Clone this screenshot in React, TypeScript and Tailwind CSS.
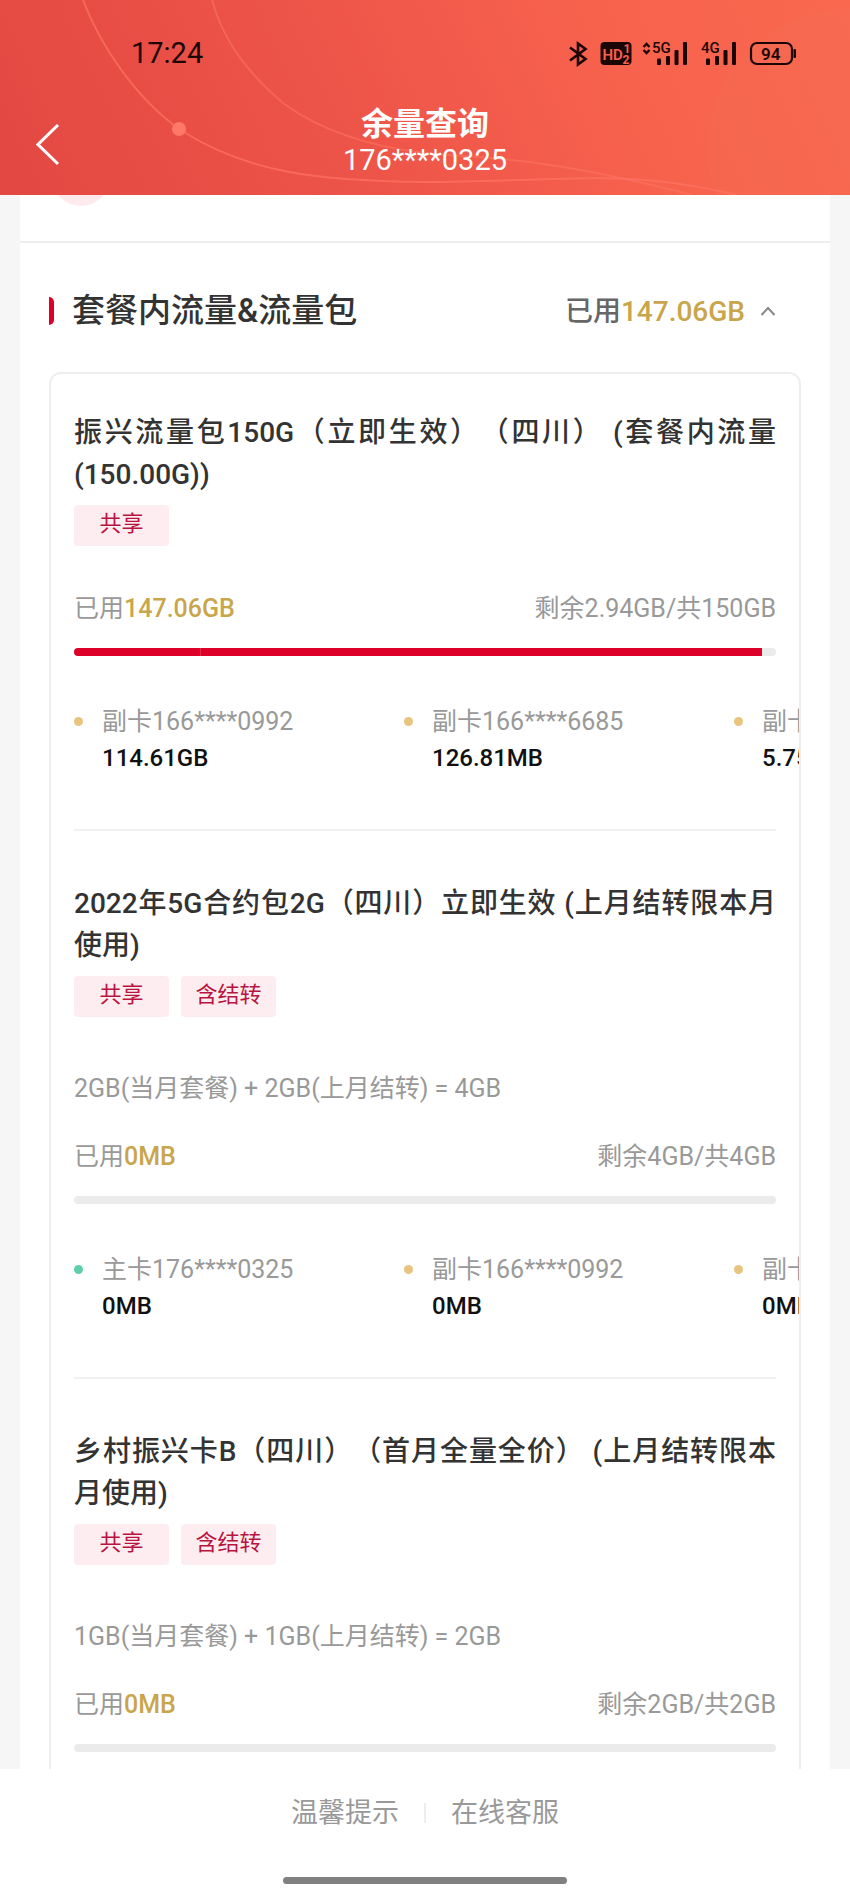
import React, { useState } from 'react'

interface Card {
  name: string
  value: string
  main?: boolean
}

interface Plan {
  title: string
  tags: string[]
  formula?: string
  used: string
  rest: string
  // share of the bar taken by each card, in percent
  segments: number[]
  cards: Card[]
}

const plans: Plan[] = [
  {
    title: '振兴流量包150G（立即生效）（四川） (套餐内流量(150.00G))',
    tags: ['共享'],
    used: '147.06GB',
    rest: '剩余2.94GB/共150GB',
    segments: [18, 80],
    cards: [
      { name: '副卡166****0992', value: '114.61GB' },
      { name: '副卡166****6685', value: '126.81MB' },
      { name: '副卡', value: '5.75' },
    ],
  },
  {
    title: '2022年5G合约包2G（四川）立即生效 (上月结转限本月使用)',
    tags: ['共享', '含结转'],
    formula: '2GB(当月套餐) + 2GB(上月结转) = 4GB',
    used: '0MB',
    rest: '剩余4GB/共4GB',
    segments: [],
    cards: [
      { name: '主卡176****0325', value: '0MB', main: true },
      { name: '副卡166****0992', value: '0MB' },
      { name: '副卡', value: '0MB' },
    ],
  },
  {
    title: '乡村振兴卡B（四川）（首月全量全价） (上月结转限本月使用)',
    tags: ['共享', '含结转'],
    formula: '1GB(当月套餐) + 1GB(上月结转) = 2GB',
    used: '0MB',
    rest: '剩余2GB/共2GB',
    segments: [],
    cards: [],
  },
]

function StatusIcons() {
  return (
    <svg
      width="230"
      height="28"
      viewBox="568 40 230 28"
      fill="none"
      stroke="#1c0605"
      fontFamily="Roboto, sans-serif"
    >
      {/* bluetooth */}
      <path
        d="M570 47.5 L585.5 59 L578 64.5 V43.5 L585.5 49 L570 60.5"
        strokeWidth="2.6"
        strokeLinejoin="miter"
      />
      {/* HD 1/2 */}
      <rect x="600.5" y="42" width="31" height="23" rx="4" fill="#1c0605" stroke="none" />
      <g fill="#f9614d" stroke="none" fontWeight="700">
        <text x="602.5" y="59.5" fontSize="15" fontWeight="600">HD</text>
        <text x="623.5" y="52.5" fontSize="12">1</text>
        <text x="622.5" y="63.5" fontSize="12">2</text>
      </g>
      {/* 5G */}
      <path d="M643.5 47 L646.5 44 L649.5 47 M643.5 50 L646.5 53 L649.5 50" strokeWidth="2.4" />
      <g fill="#1c0605" stroke="none">
        <text x="652" y="53" fontSize="15" fontWeight="500">5G</text>
        <rect x="657" y="58.5" width="4" height="6.5" rx="1" />
        <rect x="666" y="56" width="4" height="9" rx="1" />
        <rect x="674.5" y="50" width="4" height="15" rx="1" />
        <rect x="683" y="42" width="4" height="23" rx="1" />
      </g>
      {/* 4G */}
      <g fill="#1c0605" stroke="none">
        <text x="701" y="53" fontSize="15" fontWeight="500">4G</text>
        <rect x="706" y="58.5" width="4" height="6.5" rx="1" />
        <rect x="715" y="56" width="4" height="9" rx="1" />
        <rect x="723.5" y="50" width="4" height="15" rx="1" />
        <rect x="732" y="42" width="4" height="23" rx="1" />
      </g>
      {/* battery */}
      <rect x="751" y="43" width="41" height="21" rx="6" strokeWidth="2.2" />
      <rect x="793.5" y="49" width="2.5" height="9" rx="1" fill="#1c0605" stroke="none" />
      <text x="761" y="59.5" fontSize="17" fontWeight="600" fill="#1c0605" stroke="none">94</text>
    </svg>
  )
}

function HeaderArt() {
  return (
    <svg
      className="absolute inset-0 h-full w-full"
      viewBox="0 0 850 195"
      preserveAspectRatio="none"
      fill="none"
      stroke="#fd7462"
      strokeWidth="2"
      aria-hidden="true"
    >
      <circle cx="850" cy="150" r="142" fill="#f0735c" fillOpacity="0.2" stroke="none" />
      <path
        d="M83 0 C100 45 135 97 179 129 C245 172 315 181 425 182 C510 182 600 174 655 181 C690 184 715 190 737 195"
        strokeOpacity="0.7"
      />
      <path
        d="M212 0 C222 35 240 66 283 103 C325 134 375 147 425 153 C470 157 510 158 550 165 C605 173 650 184 692 195"
        strokeOpacity="0.55"
      />
      <circle cx="179" cy="129" r="7" fill="#ff7868" stroke="none" />
    </svg>
  )
}

function Header() {
  return (
    <header className="relative h-[195px] shrink-0 bg-[linear-gradient(65deg,#e34742_0%,#ee5549_42%,#f7624d_72%,#fa684f_100%)]">
      <HeaderArt />
      <div className="relative flex h-[108px] items-center justify-between pr-[52px] pl-[131px]">
        <span className="text-[29px] text-[#1c0605]">17:24</span>
        <StatusIcons />
      </div>
      <div className="relative grid grid-cols-[1fr_auto_1fr] items-start">
        <button type="button" aria-label="返回" className="ml-9 w-6 pt-4">
          <svg width="24" height="42" viewBox="0 0 24 42" fill="none" stroke="#fff" strokeWidth="3">
            <path d="M22 1 L2 20.5 L22 40" />
          </svg>
        </button>
        <div className="text-center text-white">
          <h1 className="text-[32px] leading-8 font-bold">余量查询</h1>
          <p className="text-[29px] leading-10">176****0325</p>
        </div>
      </div>
    </header>
  )
}

function CardUsage({ card }: { card: Card }) {
  return (
    <li className="flex w-[330px] shrink-0 whitespace-nowrap">
      <span
        className={
          card.main
            ? 'mt-[14px] mr-[19px] h-[9px] w-[9px] shrink-0 rounded-full bg-[#5fcfa8]'
            : 'mt-[14px] mr-[19px] h-[9px] w-[9px] shrink-0 rounded-full bg-[#e8c47f]'
        }
      />
      <div className="leading-[37px]">
        <p className="text-[25px] text-[#999]">{card.name}</p>
        <p className="text-[24px] font-medium text-[#111]">{card.value}</p>
      </div>
    </li>
  )
}

function PlanItem({ plan }: { plan: Plan }) {
  return (
    <article className="border-b-2 border-[#f0f0f0] pt-[52px] pb-[52px] first:pt-[38px] last:border-0">
      <h3 className="text-justify text-[28px] leading-[42px] font-medium text-[#333] [text-spacing-trim:space-all]">
        {plan.title}
      </h3>
      <div className="mt-[9px] flex gap-3">
        {plan.tags.map((tag) => (
          <span
            key={tag}
            className="h-[41px] w-[95px] rounded-sm bg-[#fdedf1] text-center text-[22px] leading-[38px] text-[#b9143f]"
          >
            {tag}
          </span>
        ))}
      </div>

      {plan.formula && (
        <p className="mt-[54px] text-[25px] leading-9 text-[#999]">{plan.formula}</p>
      )}

      <div
        className={
          plan.formula
            ? 'mt-8 flex justify-between text-[25px] leading-9 text-[#999]'
            : 'mt-[45px] flex justify-between text-[25px] leading-9 text-[#999]'
        }
      >
        <span>
          已用<span className="font-medium text-[#c9a54c]">{plan.used}</span>
        </span>
        <span>{plan.rest}</span>
      </div>

      <div className="mt-[21px] flex h-2 overflow-hidden rounded-full bg-[#ebebeb]">
        {plan.segments.map((width, i) => (
          <div
            key={i}
            className="border-l border-[#e02a4c] bg-[#dd0029] first:border-0"
            style={{ width: `${width}%` }}
          />
        ))}
      </div>

      {plan.cards.length > 0 && (
        <ul className="mt-[47px] -mr-[23px] flex overflow-hidden">
          {plan.cards.map((card, i) => (
            <CardUsage key={i} card={card} />
          ))}
        </ul>
      )}
    </article>
  )
}

export default function App() {
  const [open, setOpen] = useState(true)

  return (
    <div
      lang="zh-CN"
      className="flex h-screen flex-col bg-white font-[Roboto,'Noto_Sans_CJK_SC',sans-serif]"
    >
      <Header />

      <main className="min-h-0 flex-1 overflow-y-auto bg-[#f6f6f6] px-5 [scrollbar-width:none]">
        <div className="bg-white">
          <div className="flex h-12 items-end overflow-hidden border-b-2 border-[#eee] pb-[35px] pl-8">
            <span className="h-[58px] w-[58px] shrink-0 rounded-full bg-linear-to-b from-[#fdd5dc] to-[#fdecef]" />
          </div>

          <section className="px-[29px]">
            <div className="flex items-center justify-between pt-11 pb-[37px]">
              <h2 className="flex items-center text-[33px] leading-[48px] font-medium text-[#333]">
                <span className="mr-[18px] h-7 w-[5px] rounded-r-md bg-[#dd0029]" />
                套餐内流量&amp;流量包
              </h2>
              <button
                type="button"
                aria-expanded={open}
                onClick={() => setOpen(!open)}
                className="mr-[25px] flex items-center pt-[2px] text-[28px] font-medium text-[#666]"
              >
                已用<span className="text-[#c9a54c]">147.06GB</span>
                <svg
                  className={open ? 'ml-[15px]' : 'ml-[15px] rotate-180'}
                  width="16"
                  height="12"
                  viewBox="0 0 16 12"
                  fill="none"
                  stroke="#888"
                  strokeWidth="2"
                >
                  <path d="M1.5 9 L8 2 L14.5 9" />
                </svg>
              </button>
            </div>

            {open && (
              <div className="overflow-hidden rounded-xl border-2 border-[#eee] px-[23px]">
                {plans.map((plan) => (
                  <PlanItem key={plan.title} plan={plan} />
                ))}
              </div>
            )}
          </section>
        </div>
      </main>

      <footer className="shrink-0 bg-white pt-6 pb-[5px] text-[27px] leading-10 text-[#999]">
        <div className="flex items-center justify-center">
          <a href="#tips">温馨提示</a>
          <span className="mx-[25px] h-5 w-[2px] bg-[#eee]" />
          <a href="#service">在线客服</a>
        </div>
        <div className="mx-auto mt-11 h-[7px] w-1/3 rounded-full bg-[#808080]" />
      </footer>
    </div>
  )
}
